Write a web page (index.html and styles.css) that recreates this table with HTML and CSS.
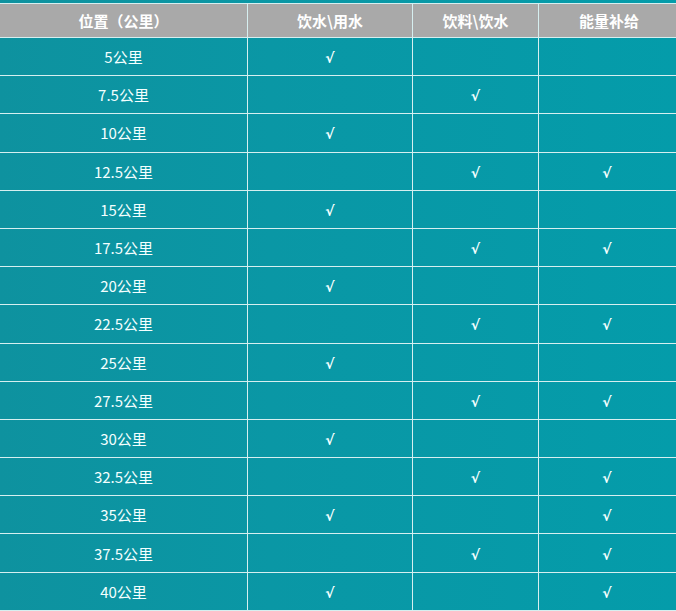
FILE: index.html
```html
<!DOCTYPE html>
<html lang="zh">
<head>
<meta charset="utf-8">
<link rel="stylesheet" href="styles.css">
</head>
<body>
<div class="wrap">
<table class="supply">
<thead>
<tr><th class="c1">位置（公里）</th><th class="c2">饮水\用水</th><th class="c3">饮料\饮水</th><th class="c4">能量补给</th></tr>
</thead>
<tbody>
<tr><td>5公里</td><td><span class="ok">√</span></td><td></td><td></td></tr>
<tr><td>7.5公里</td><td></td><td><span class="ok">√</span></td><td></td></tr>
<tr><td>10公里</td><td><span class="ok">√</span></td><td></td><td></td></tr>
<tr><td>12.5公里</td><td></td><td><span class="ok">√</span></td><td><span class="ok">√</span></td></tr>
<tr><td>15公里</td><td><span class="ok">√</span></td><td></td><td></td></tr>
<tr><td>17.5公里</td><td></td><td><span class="ok">√</span></td><td><span class="ok">√</span></td></tr>
<tr><td>20公里</td><td><span class="ok">√</span></td><td></td><td></td></tr>
<tr><td>22.5公里</td><td></td><td><span class="ok">√</span></td><td><span class="ok">√</span></td></tr>
<tr><td>25公里</td><td><span class="ok">√</span></td><td></td><td></td></tr>
<tr><td>27.5公里</td><td></td><td><span class="ok">√</span></td><td><span class="ok">√</span></td></tr>
<tr><td>30公里</td><td><span class="ok">√</span></td><td></td><td></td></tr>
<tr><td>32.5公里</td><td></td><td><span class="ok">√</span></td><td><span class="ok">√</span></td></tr>
<tr><td>35公里</td><td><span class="ok">√</span></td><td></td><td><span class="ok">√</span></td></tr>
<tr><td>37.5公里</td><td></td><td><span class="ok">√</span></td><td><span class="ok">√</span></td></tr>
<tr><td>40公里</td><td><span class="ok">√</span></td><td></td><td><span class="ok">√</span></td></tr>
</tbody>
</table>
</div>
</body>
</html>
```
FILE: styles.css
```css
html, body {
  margin: 0;
  padding: 0;
}
body {
  background: #0a98a6;
  font-family: "Noto Sans CJK SC", "Noto Sans", sans-serif;
}
.wrap {
  width: 676px;
  height: 611px;
  padding-top: 3px;
  box-sizing: border-box;
  background: linear-gradient(to right, #0e929f 0%, #0a97a5 40%, #049caa 100%);
}
.supply {
  width: 676px;
  border-collapse: collapse;
  table-layout: fixed;
  color: #f4ffff;
}
.supply th, .supply td {
  border: 1px solid #d6eff0;
  text-align: center;
  padding: 0;
}
.supply tr > :first-child {
  border-left: none;
}
.supply th {
  background: #a9a9a9;
  color: #ffffff;
  font-weight: bold;
  font-size: 15px;
  height: 33px;
}
.supply td {
  font-size: 15px;
  height: 37.2px;
}
.ok {
  font-family: "DejaVu Sans", sans-serif;
  font-weight: bold;
  font-size: 14px;
}
.c1 { width: 247px; }
.c2 { width: 164px; }
.c3 { width: 125px; }
.c4 { width: 140px; }
.supply td:last-child .ok {
  margin-right: 4px;
}
```
